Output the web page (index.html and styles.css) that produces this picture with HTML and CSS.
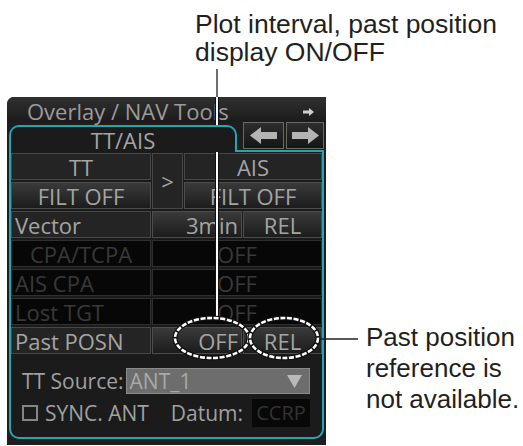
FILE: index.html
```html
<html>
<head>
  <title>TT/AIS Overlay</title>
  <link rel="stylesheet" href="styles.css">
</head>
<body>

<div id="page">

  <p class="note note_top">Plot interval, past position<br>display ON/OFF</p>

  <div id="main">
    <div id="panel">

      <div class="panel_head">
        <span class="panel_title">Overlay / NAV Tools</span>
        <svg class="head_arrow" width="11" height="8" viewBox="0 0 11 8"><path d="M0 2.5 H6 V0 L11 4 L6 8 V5.5 H0 Z" fill="#cfcfcf"/></svg>
      </div>

      <div class="tab_row">
        <div class="tab">TT/AIS</div>
        <div class="arrow_btn btn_left">
          <svg width="27" height="17" viewBox="0 0 27 17"><path d="M0 8.5 L11 0 V5 H27 V12 H11 V17 Z" fill="#b4b4b4"/></svg>
        </div>
        <div class="arrow_btn btn_right">
          <svg width="27" height="17" viewBox="0 0 27 17"><path d="M27 8.5 L16 0 V5 H0 V12 H16 V17 Z" fill="#b4b4b4"/></svg>
        </div>
      </div>

      <div class="tab_body">
        <div class="grid">
          <div class="cell label center tt">TT</div>
          <div class="cell label center gt">&gt;</div>
          <div class="cell label center ais">AIS</div>

          <div class="cell button center tt">FILT OFF</div>
          <div class="cell button center ais">FILT OFF</div>

          <div class="cell label">Vector</div>
          <div class="cell button right wide">3min</div>
          <div class="cell button center">REL</div>

          <div class="cell off center">CPA/TCPA</div>
          <div class="cell off center full">OFF</div>

          <div class="cell off">AIS CPA</div>
          <div class="cell off center full">OFF</div>

          <div class="cell off">Lost TGT</div>
          <div class="cell off center full">OFF</div>

          <div class="cell label">Past POSN</div>
          <div class="cell button right wide">OFF</div>
          <div class="cell button center">REL</div>
        </div>

        <div class="lower">
          <div class="source_row">
            <span class="text">TT Source:</span>
            <div class="dropdown">
              <span class="drop_value">ANT_1</span>
              <svg width="15" height="13" viewBox="0 0 15 13"><polygon points="0,0 15,0 7.5,13" fill="#b9b9b9"/></svg>
            </div>
          </div>
          <div class="sync_row">
            <span class="checkbox"></span>
            <span class="text sync">SYNC. ANT</span>
            <span class="text datum">Datum:</span>
            <span class="datum_box">CCRP</span>
          </div>
        </div>
      </div>

    </div>

    <p class="note note_side">Past position<br>reference is<br>not available.</p>
  </div>

  <!-- callout lines and rings drawn over the panel -->
  <svg class="callouts" width="523" height="446" viewBox="0 0 523 446">
    <path d="M217 69 V98" stroke="#231f20" stroke-width="1.3"/>
    <path d="M217 97 V318" stroke="#111" stroke-width="4"/>
    <path d="M217 97 V318" stroke="#fff" stroke-width="2"/>
    <ellipse cx="212" cy="338" rx="37" ry="20" fill="none" stroke="#111" stroke-width="5"/>
    <ellipse cx="212" cy="338" rx="37" ry="20" fill="none" stroke="#fff" stroke-width="2.6" stroke-dasharray="5 1.6"/>
    <ellipse cx="284" cy="338" rx="34" ry="20" fill="none" stroke="#111" stroke-width="5"/>
    <ellipse cx="284" cy="338" rx="34" ry="20" fill="none" stroke="#fff" stroke-width="2.6" stroke-dasharray="5 1.6"/>
    <path d="M319 339 H358" stroke="#231f20" stroke-width="1.3"/>
  </svg>

</div>

</body>
</html>
```

FILE: styles.css
```css
body {
  margin: 0;
  background: white;
}
#page {
  position: relative;
  width: 523px;
  height: 446px;
  overflow: hidden;
}

.note {
  margin: 0;
  font-family: "Liberation Sans", Arial, sans-serif;
  color: #231f20;
  white-space: nowrap;
}
.note_top {
  padding: 10px 0 0 195px;
  font-size: 26.5px;
  line-height: 28px;
}
.note_side {
  margin: 225px 0 0 40px;
  font-size: 26px;
  line-height: 31px;
}

#main {
  display: flex;
  align-items: flex-start;
  margin-top: 31px;
}

#panel {
  margin-left: 7px;
  width: 319px;
  padding: 0 2px 6px 2px;
  box-sizing: border-box;
  background: #1e1e1e;
  border-radius: 7px 0 0 0;
  font-family: "Open Sans", sans-serif;
  color: #a4a4a4;
}

.panel_head {
  display: flex;
  align-items: center;
  height: 25px;
  margin: 0 -2px;
  padding: 0 12px 0 20px;
  background: linear-gradient(#303030, #1b1b1b);
  border-radius: 7px 0 0 0;
}
.panel_title {
  flex: 1;
  font-size: 22px;
  line-height: 24px;
  padding-top: 2px;
  color: #9b9b9b;
  white-space: nowrap;
}
.head_arrow {
  margin-top: 5px;
}

.tab_row {
  display: flex;
  align-items: flex-end;
  height: 28px;
}
.tab {
  position: relative;
  z-index: 1;
  width: 228px;
  height: 27px;
  margin-bottom: -2px;
  box-sizing: border-box;
  border: 2px solid #22a6b6;
  border-bottom: none;
  border-radius: 10px 10px 0 0;
  background: #1b1b1b;
  text-align: center;
  font-size: 22px;
  line-height: 27px;
}
.arrow_btn {
  display: flex;
  align-items: center;
  justify-content: center;
  height: 27px;
  margin-bottom: 1px;
  box-sizing: border-box;
  border: 1px solid #6b6a5e;
  background: linear-gradient(#2e2e2e, #151515);
}
.btn_left {
  width: 41px;
  margin-left: 6px;
}
.btn_right {
  width: 38px;
  margin-left: 2px;
}

.tab_body {
  border: 2px solid #22a6b6;
  border-radius: 0 0 10px 10px;
  background: #1b1b1b;
}

.grid {
  display: grid;
  grid-template-columns: 140px 31px 58px 79px;
  grid-template-rows: repeat(7, 27px);
  gap: 2px 1px;
  padding-top: 1px;
  background: #1b1b1b;
}
.cell {
  display: flex;
  align-items: center;
  box-sizing: border-box;
  padding: 0 3px;
  font-size: 22px;
  white-space: nowrap;
  border: 1px solid #474747;
}
.center {
  justify-content: center;
}
.right {
  justify-content: flex-end;
}
.label {
  background: #242424;
}
.button {
  background: linear-gradient(#3a3a3a, #1c1c1c);
  border-color: #4d4d4d;
}
.off {
  background: #070707;
  border-color: #2f2f2f;
  color: #393939;
}
.gt {
  grid-row: span 2;
}
.ais {
  grid-column: 3 / 5;
}
.wide {
  grid-column: 2 / 4;
}
.full {
  grid-column: 2 / 5;
}

.lower {
  padding: 14px 12px 10px 11px;
}
.text {
  font-size: 21px;
  color: #a0a0a0;
  white-space: nowrap;
}
.source_row {
  display: flex;
  align-items: center;
  height: 26px;
}
.dropdown {
  display: flex;
  align-items: center;
  justify-content: space-between;
  flex: 1;
  height: 26px;
  margin-left: 2px;
  padding: 0 7px 0 3px;
  box-sizing: border-box;
  background: #6d6d6d;
  border: 1px solid #8b8b8b;
}
.drop_value {
  font-size: 21px;
  color: #a9a9a9;
}

.sync_row {
  display: flex;
  align-items: center;
  height: 28px;
  margin-top: 5px;
}
.checkbox {
  width: 16px;
  height: 16px;
  box-sizing: border-box;
  border: 2px solid #858585;
}
.sync {
  margin-left: 7px;
}
.datum {
  margin-left: auto;
}
.datum_box {
  width: 58px;
  height: 28px;
  margin-left: 9px;
  background: #080808;
  text-align: center;
  font-size: 20px;
  line-height: 28px;
  color: #333;
}

.callouts {
  position: absolute;
  left: 0;
  top: 0;
  pointer-events: none;
}
```
